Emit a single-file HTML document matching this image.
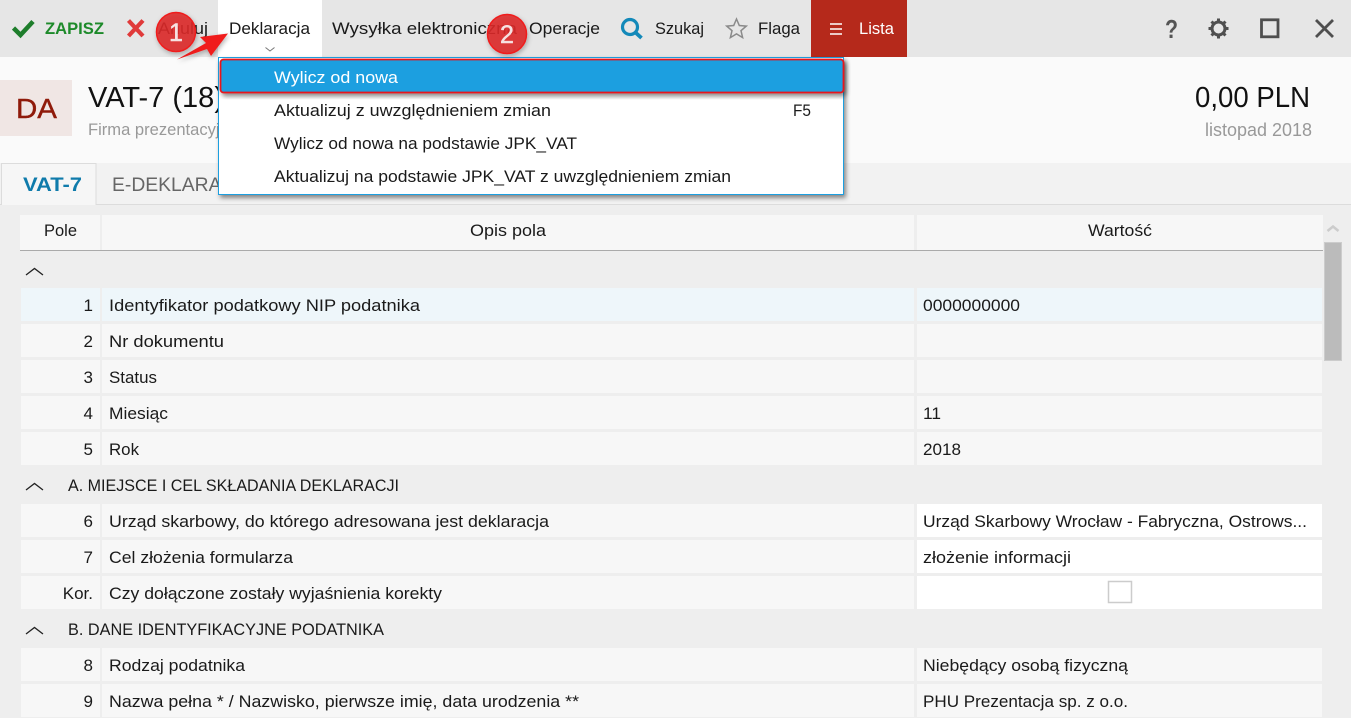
<!DOCTYPE html>
<html lang="pl">
<head>
<meta charset="utf-8">
<title>VAT-7</title>
<style>
html,body{margin:0;padding:0;width:1351px;height:718px;overflow:hidden;background:#eee}
svg{display:block}
text{font-family:"Liberation Sans",sans-serif;font-size:17px;fill:#1a1a1a}
.g{fill:#999}
</style>
</head>
<body>
<svg width="1351" height="718" viewBox="0 0 1351 718" xmlns="http://www.w3.org/2000/svg">
<defs>
<filter id="sh" x="-5%" y="-20%" width="110%" height="140%"><feDropShadow dx="2" dy="3" stdDeviation="2.5" flood-color="#000" flood-opacity=".45"/></filter>
<filter id="cs" x="-30%" y="-30%" width="160%" height="160%"><feDropShadow dx="1" dy="2" stdDeviation="2.5" flood-color="#000" flood-opacity=".3"/></filter>
</defs>
<rect width="1351" height="718" fill="#eee"/>
<!-- toolbar -->
<rect width="1351" height="57" fill="#e6e6e6"/>
<rect x="218" width="104" height="57" fill="#fff"/>
<rect x="811" width="96" height="57" fill="#b5291b"/>
<path d="M13.500 28l7 7L33 21.500" fill="none" stroke="#1d7d2b" stroke-width="4.500"/>
<text x="45" y="34" style="font-weight:700;fill:#1d8a2a" textLength="59" lengthAdjust="spacingAndGlyphs">ZAPISZ</text>
<path d="M128.500 20.500l14.500 15.500M143 20.500L128.500 36" fill="none" stroke="#e03a3a" stroke-width="4.200"/>
<text x="158" y="34" textLength="50" lengthAdjust="spacingAndGlyphs">Anuluj</text>
<text x="229" y="34" textLength="81" lengthAdjust="spacingAndGlyphs">Deklaracja</text>
<path d="M265.500 47.500l4.500 3.500 4.500-3.500" fill="none" stroke="#777" stroke-width="1"/>
<text x="332" y="34" textLength="185" lengthAdjust="spacingAndGlyphs">Wysyłka elektroniczna</text>
<text x="529" y="34" textLength="71" lengthAdjust="spacingAndGlyphs">Operacje</text>
<circle cx="630" cy="27" r="7.500" fill="none" stroke="#1389b9" stroke-width="3.200"/>
<path d="M635.500 32.500l6 5.500" stroke="#1389b9" stroke-width="3.800" fill="none"/>
<text x="655" y="34" textLength="49" lengthAdjust="spacingAndGlyphs">Szukaj</text>
<path d="M736.500 19l2.800 6.500 7 .6-5.300 4.600 1.600 6.900-6.100-3.700-6.100 3.700 1.600-6.900-5.300-4.600 7-.6z" fill="none" stroke="#8a8a8a" stroke-width="1.500"/>
<text x="758" y="34" textLength="42" lengthAdjust="spacingAndGlyphs">Flaga</text>
<path d="M830 24h12M830 29h12M830 34h12" stroke="#fff" stroke-width="1.600"/>
<text x="859" y="34" style="fill:#fff" textLength="35" lengthAdjust="spacingAndGlyphs">Lista</text>
<!-- window icons -->
<text x="1165" y="38" style="font-size:26px;font-weight:700;fill:#555" textLength="13" lengthAdjust="spacingAndGlyphs">?</text>
<g fill="none" stroke="#4f4f4f">
<circle cx="1218.500" cy="28.500" r="6.500" stroke-width="3"/>
<path d="M1218.500 18.500v3.500M1218.500 35v3.500M1208.500 28.500h3.500M1225 28.500h3.500M1211.500 21.500l2.400 2.400M1223.100 33.100l2.400 2.400M1211.500 35.500l2.400-2.400M1223.100 23.900l2.400-2.400" stroke-width="3"/>
<rect x="1261.500" y="19.800" width="16.500" height="17" stroke-width="2.800"/>
<path d="M1316 20l17 17M1333 20l-17 17" stroke-width="2.800"/>
</g>
<!-- document header -->
<rect y="57" width="1351" height="106" fill="#fafafa"/>
<rect y="80" width="72" height="56" fill="#f0e6e4"/>
<text x="16" y="118" style="font-size:28px;fill:#8f1a0a;stroke:#8f1a0a;stroke-width:.4" textLength="41" lengthAdjust="spacingAndGlyphs">DA</text>
<text x="88" y="107" style="font-size:29px;fill:#111" textLength="136" lengthAdjust="spacingAndGlyphs">VAT-7 (18)</text>
<text x="88" y="135" class="g" textLength="150" lengthAdjust="spacingAndGlyphs">Firma prezentacyjna</text>
<text x="1195" y="107" style="font-size:29px;fill:#111" textLength="115" lengthAdjust="spacingAndGlyphs">0,00 PLN</text>
<text x="1205" y="136" class="g" style="font-size:18px" textLength="107" lengthAdjust="spacingAndGlyphs">listopad 2018</text>
<!-- tabs -->
<rect y="163" width="1351" height="41" fill="#f2f2f2"/>
<rect y="204" width="1351" height="1" fill="#dcdcdc"/>
<path d="M1.500 205V163.500H96V205" fill="#f6f6f6" stroke="#dcdcdc"/>
<text x="23" y="191" style="font-size:19px;font-weight:700;fill:#0f7bab" textLength="59" lengthAdjust="spacingAndGlyphs">VAT-7</text>
<text x="112" y="191" style="font-size:19px;fill:#666" textLength="146" lengthAdjust="spacingAndGlyphs">E-DEKLARACJE</text>
<!-- table header -->
<rect x="20" y="215" width="1303" height="35" fill="#f7f7f7"/>
<rect x="100" y="215" width="2" height="35" fill="#eee"/>
<rect x="914" y="215" width="3" height="35" fill="#eee"/>
<rect x="20" y="250" width="1303" height="1" fill="#aaa"/>
<text x="44" y="236" textLength="33" lengthAdjust="spacingAndGlyphs">Pole</text>
<text x="470" y="236" textLength="76" lengthAdjust="spacingAndGlyphs">Opis pola</text>
<text x="1088" y="236" textLength="64" lengthAdjust="spacingAndGlyphs">Wartość</text>
<!-- rows -->
<g fill="#eef6fa">
<rect x="21" y="288" width="79" height="33"/><rect x="102" y="288" width="812" height="33"/><rect x="917" y="288" width="405" height="33"/>
</g>
<g fill="#f7f7f7">
<rect x="21" y="324" width="79" height="33"/><rect x="102" y="324" width="812" height="33"/><rect x="917" y="324" width="405" height="33"/>
<rect x="21" y="360" width="79" height="33"/><rect x="102" y="360" width="812" height="33"/><rect x="917" y="360" width="405" height="33"/>
<rect x="21" y="396" width="79" height="33"/><rect x="102" y="396" width="812" height="33"/><rect x="917" y="396" width="405" height="33"/>
<rect x="21" y="432" width="79" height="33"/><rect x="102" y="432" width="812" height="33"/><rect x="917" y="432" width="405" height="33"/>
<rect x="21" y="504" width="79" height="33"/><rect x="102" y="504" width="812" height="33"/>
<rect x="21" y="540" width="79" height="33"/><rect x="102" y="540" width="812" height="33"/>
<rect x="21" y="576" width="79" height="33"/><rect x="102" y="576" width="812" height="33"/>
<rect x="21" y="648" width="79" height="33"/><rect x="102" y="648" width="812" height="33"/><rect x="917" y="648" width="405" height="33"/>
<rect x="21" y="684" width="79" height="33"/><rect x="102" y="684" width="812" height="33"/><rect x="917" y="684" width="405" height="33"/>
</g>
<g fill="#fff">
<rect x="917" y="504" width="405" height="33"/><rect x="917" y="540" width="405" height="33"/><rect x="917" y="576" width="405" height="33"/>
</g>
<rect x="1108.500" y="581.500" width="23" height="21" fill="#fff" stroke="#ccc" stroke-width="1.500"/>
<g fill="none" stroke="#222" stroke-width="1.300">
<path d="M26 275l8.500-6.500 8.500 6.500M26 490l8.500-6.500 8.500 6.500M26 634l8.500-6.500 8.500 6.500"/>
</g>
<g text-anchor="end">
<text x="93" y="311">1</text><text x="93" y="347">2</text><text x="93" y="383">3</text><text x="93" y="419">4</text><text x="93" y="455">5</text>
<text x="93" y="527">6</text><text x="93" y="563">7</text><text x="93" y="599">Kor.</text>
<text x="93" y="671">8</text><text x="93" y="707">9</text>
</g>
<text x="109" y="311" textLength="311" lengthAdjust="spacingAndGlyphs">Identyfikator podatkowy NIP podatnika</text>
<text x="109" y="347" textLength="115" lengthAdjust="spacingAndGlyphs">Nr dokumentu</text>
<text x="109" y="383" textLength="48" lengthAdjust="spacingAndGlyphs">Status</text>
<text x="109" y="419" textLength="59" lengthAdjust="spacingAndGlyphs">Miesiąc</text>
<text x="109" y="455" textLength="30" lengthAdjust="spacingAndGlyphs">Rok</text>
<text x="68" y="491" textLength="331" lengthAdjust="spacingAndGlyphs">A. MIEJSCE I CEL SKŁADANIA DEKLARACJI</text>
<text x="109" y="527" textLength="440" lengthAdjust="spacingAndGlyphs">Urząd skarbowy, do którego adresowana jest deklaracja</text>
<text x="109" y="563" textLength="184" lengthAdjust="spacingAndGlyphs">Cel złożenia formularza</text>
<text x="109" y="599" textLength="333" lengthAdjust="spacingAndGlyphs">Czy dołączone zostały wyjaśnienia korekty</text>
<text x="68" y="635" textLength="316" lengthAdjust="spacingAndGlyphs">B. DANE IDENTYFIKACYJNE PODATNIKA</text>
<text x="109" y="671" textLength="136" lengthAdjust="spacingAndGlyphs">Rodzaj podatnika</text>
<text x="109" y="707" textLength="470" lengthAdjust="spacingAndGlyphs">Nazwa pełna * / Nazwisko, pierwsze imię, data urodzenia **</text>
<text x="923" y="311" textLength="97" lengthAdjust="spacingAndGlyphs">0000000000</text>
<text x="923" y="419" textLength="18" lengthAdjust="spacingAndGlyphs">11</text>
<text x="923" y="455" textLength="38" lengthAdjust="spacingAndGlyphs">2018</text>
<text x="923" y="527" textLength="384" lengthAdjust="spacingAndGlyphs">Urząd Skarbowy Wrocław - Fabryczna, Ostrows...</text>
<text x="923" y="563" textLength="148" lengthAdjust="spacingAndGlyphs">złożenie informacji</text>
<text x="923" y="671" textLength="205" lengthAdjust="spacingAndGlyphs">Niebędący osobą fizyczną</text>
<text x="923" y="707" textLength="205" lengthAdjust="spacingAndGlyphs">PHU Prezentacja sp. z o.o.</text>
<!-- scrollbar -->
<path d="M1327.500 231l5.500-4.500 5.500 4.500" fill="none" stroke="#ccc" stroke-width="2.500"/>
<rect x="1324.500" y="242.500" width="17" height="118" fill="#bbb" stroke="#ccc"/>
<!-- dropdown -->
<rect x="218.500" y="57.500" width="625" height="137" fill="#fff" stroke="#1a9fe0" filter="url(#sh)"/>
<rect x="220.500" y="59.500" width="623" height="33" rx="3" fill="#1a9fe0" stroke="#e8141c" stroke-width="1.800" filter="url(#sh)"/>
<text x="274" y="83" style="fill:#fff" textLength="124" lengthAdjust="spacingAndGlyphs">Wylicz od nowa</text>
<text x="274" y="116" textLength="277" lengthAdjust="spacingAndGlyphs">Aktualizuj z uwzględnieniem zmian</text>
<text x="793" y="116" textLength="18" lengthAdjust="spacingAndGlyphs">F5</text>
<text x="274" y="149" textLength="303" lengthAdjust="spacingAndGlyphs">Wylicz od nowa na podstawie JPK_VAT</text>
<text x="274" y="182" textLength="457" lengthAdjust="spacingAndGlyphs">Aktualizuj na podstawie JPK_VAT z uwzględnieniem zmian</text>
<!-- annotations -->
<path d="M177 59.500L206 43l-6-6 28-3.500-17 22.500-4-7z" fill="#f01c1c" filter="url(#cs)"/>
<circle cx="176" cy="32" r="19.500" fill="#dd2a2a" fill-opacity=".88" stroke="#f01c1c" stroke-width="1.500" filter="url(#cs)"/>
<text x="176" y="41" text-anchor="middle" style="font-size:25px;fill:#f6e2e2;stroke:#f6e2e2;stroke-width:.5">1</text>
<circle cx="507" cy="34" r="19.500" fill="#dd2a2a" fill-opacity=".88" stroke="#f01c1c" stroke-width="1.500" filter="url(#cs)"/>
<text x="507" y="43" text-anchor="middle" style="font-size:25px;fill:#f6e2e2;stroke:#f6e2e2;stroke-width:.5">2</text>
</svg>
</body>
</html>
